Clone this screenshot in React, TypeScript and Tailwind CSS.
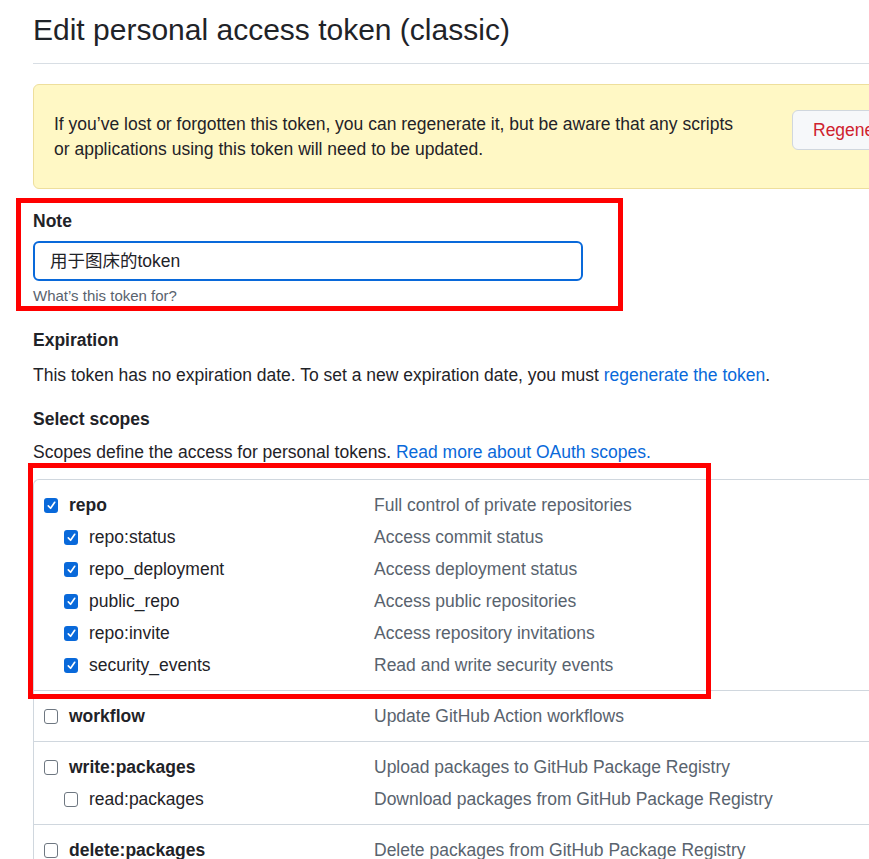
import React from "react";

type Scope = { name: string; desc: string; checked?: boolean; sub?: boolean };

const groups: Scope[][] = [
  [
    { name: "repo", desc: "Full control of private repositories", checked: true },
    { name: "repo:status", desc: "Access commit status", checked: true, sub: true },
    { name: "repo_deployment", desc: "Access deployment status", checked: true, sub: true },
    { name: "public_repo", desc: "Access public repositories", checked: true, sub: true },
    { name: "repo:invite", desc: "Access repository invitations", checked: true, sub: true },
    { name: "security_events", desc: "Read and write security events", checked: true, sub: true },
  ],
  [{ name: "workflow", desc: "Update GitHub Action workflows" }],
  [
    { name: "write:packages", desc: "Upload packages to GitHub Package Registry" },
    { name: "read:packages", desc: "Download packages from GitHub Package Registry", sub: true },
  ],
  [{ name: "delete:packages", desc: "Delete packages from GitHub Package Registry" }],
];

function Checkbox({ checked }: { checked?: boolean }) {
  if (checked) {
    return (
      <span className="w-[14px] h-[15px] rounded-[3px] bg-[#0969da] flex items-center justify-center shrink-0">
        <svg viewBox="0 0 12 12" className="w-[11px] h-[11px]">
          <path d="M2.5 6.5 L5 9 L9.5 2.5" fill="none" stroke="white" strokeWidth="1.8" strokeLinecap="round" strokeLinejoin="round" />
        </svg>
      </span>
    );
  }
  return <span className="w-[14px] h-[15px] rounded-[3px] border border-[#6e7781] bg-white shrink-0" />;
}

function ScopeRow({ s }: { s: Scope }) {
  return (
    <div className="flex items-center h-[32px]">
      <div className={`flex items-center gap-[11px] w-[340px] ${s.sub ? "pl-[30px]" : "pl-[10px]"}`}>
        <Checkbox checked={s.checked} />
        <span className={s.sub ? "text-[#1f2328]" : "font-bold text-[#1f2328]"}>{s.name}</span>
      </div>
      <span className="text-[#59636e]">{s.desc}</span>
    </div>
  );
}

export default function App() {
  return (
    <div
      className="relative w-[869px] h-[859px] overflow-hidden bg-white text-[17.5px] text-[#1f2328]"
      style={{ fontFamily: '"Liberation Sans", Arial, "Noto Sans CJK SC", sans-serif' }}
    >
      <div className="w-[1000px] pl-[33px]">
        <h1 className="text-[30px] leading-[36px] pt-[12px] pb-[15px] border-b border-[#d8dee4]">
          Edit personal access token (classic)
        </h1>

        {/* warning banner */}
        <div className="mt-[20px] h-[105px] bg-[#fff8c5] border border-[#eedf9c] rounded-l-[6px] flex items-center pl-[20px]">
          <p className="w-[695px] leading-[25px] text-[#1f2328]">
            If you’ve lost or forgotten this token, you can regenerate it, but be aware that any scripts or applications using this token will need to be updated.
          </p>
          <button className="self-start mt-[25px] ml-[43px] h-[40px] px-[20px] bg-[#f6f8fa] border border-[#d0d7de] rounded-[6px] text-[#cf222e] whitespace-nowrap">
            Regenerate token
          </button>
        </div>

        {/* note */}
        <div className="mt-[21px]">
          <div className="font-bold leading-[22px]">Note</div>
          <div className="mt-[9px] w-[550px] h-[40px] border-2 border-[#0969da] rounded-[6px] flex items-center pl-[15px]">
            <span style={{ fontFamily: '"Liberation Sans", "Noto Sans CJK SC", sans-serif' }}>用于图床的token</span>
          </div>
          <div className="mt-[5px] text-[15px] leading-[20px] text-[#59636e]">What’s this token for?</div>
        </div>

        {/* expiration */}
        <div className="mt-[23px] font-bold leading-[22px]">Expiration</div>
        <p className="mt-[12px] leading-[24px]">
          This token has no expiration date. To set a new expiration date, you must{" "}
          <span className="text-[#0969da]">regenerate the token</span>.
        </p>

        {/* scopes */}
        <div className="mt-[21px] font-bold leading-[22px]">Select scopes</div>
        <p className="mt-[10px] leading-[24px]">
          Scopes define the access for personal tokens.{" "}
          <span className="text-[#0969da]">Read more about OAuth scopes.</span>
        </p>

        <div className="mt-[15px] border-l border-t border-[#d0d7de] rounded-tl-[6px]">
          {groups.map((g, i) => (
            <div key={i} className={`py-[9px] ${i > 0 ? "border-t border-[#d0d7de]" : ""}`}>
              {g.map((s) => (
                <ScopeRow key={s.name} s={s} />
              ))}
            </div>
          ))}
        </div>
      </div>

      {/* annotation boxes */}
      <div className="absolute left-[16px] top-[198px] w-[607px] h-[113px] border-[5px] border-[#ff0000]" />
      <div className="absolute left-[28px] top-[463px] w-[683px] h-[236px] border-[5px] border-[#ff0000]" />
    </div>
  );
}
